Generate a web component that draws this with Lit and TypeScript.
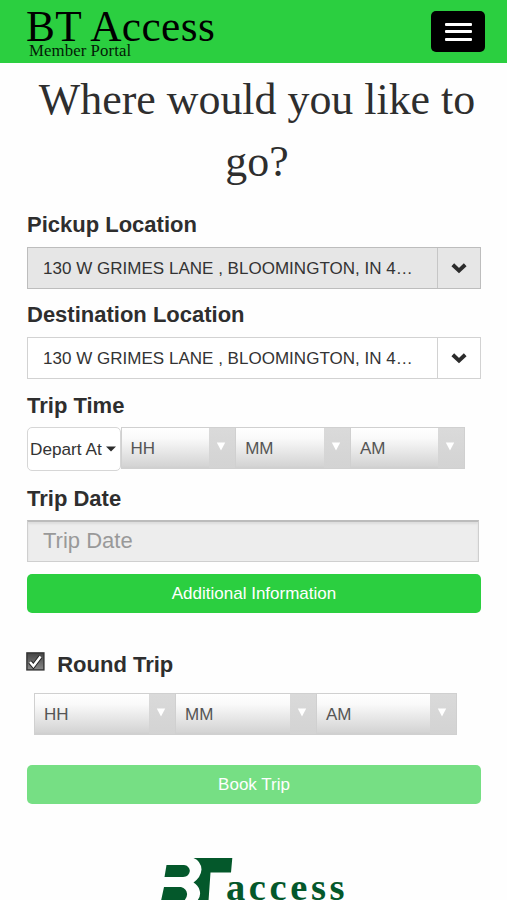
import { LitElement, html, css, svg } from "lit";
import { customElement, property } from "lit/decorators.js";

@customElement("location-picker")
class LocationPicker extends LitElement {
  @property() value = "";
  @property({ type: Boolean, reflect: true }) active = false;

  static styles = css`
    :host { display: flex; box-sizing: border-box; height: 42px; width: 454px; border: 1.5px solid #d2d2d2; background: #fff; }
    :host([active]) { background: #e6e6e6; border-color: #bdbdbd; }
    .value { flex: 1; min-width: 0; padding-left: 15px; font-size: 17px; letter-spacing: 0.02px; line-height: 41px; color: #333; white-space: nowrap; }
    .toggle { box-sizing: border-box; width: 43px; border-left: 1.5px solid #d2d2d2; display: flex; align-items: center; justify-content: center; }
    :host([active]) .toggle { border-color: #c6c6c6; }
  `;

  render() {
    return html`
      <div class="value">${this.value}</div>
      <div class="toggle">
        <svg width="16" height="12" viewBox="0 0 16 12"><path d="M1.8 2.8 L8 8.6 L14.2 2.8" fill="none" stroke="#2c2c2c" stroke-width="4" /></svg>
      </div>`;
  }
}

@customElement("time-select")
class TimeSelect extends LitElement {
  @property() label = "";

  static styles = css`
    :host { display: flex; box-sizing: border-box; height: 42px; border: 1.5px solid #d0d0d0; border-right-width: 0; background: linear-gradient(#fff 0%, #fafafa 25%, #d4d4d4 95%, #cfcfcf 100%); }
    :host(:last-child) { border-right-width: 1.5px; }
    .label { flex: 1; padding-left: 9px; font-size: 17px; line-height: 41px; color: #555; }
    .arrow { width: 26px; background: linear-gradient(#dadada, #d3d3d3); display: flex; padding: 14px 0 0 7px; box-sizing: border-box; }
  `;

  render() {
    return html`
      <div class="label">${this.label}</div>
      <div class="arrow">
        <svg width="10" height="9" viewBox="0 0 10 9"><path d="M0.8 0.5 H9.2 L5 8.5 Z" fill="#fff" /></svg>
      </div>`;
  }
}

@customElement("app-root")
class AppRoot extends LitElement {
  static styles = css`
    :host { display: block; height: 900px; overflow: hidden; background: #fefefe; color: #2e2e2e; font-family: "Liberation Sans", Arial, sans-serif; }
    .bar { box-sizing: border-box; height: 63px; background: #2bcf40; display: flex; justify-content: space-between; padding: 11px 22px 0 26px; }
    .brand { font-family: "Liberation Serif", serif; color: #000; }
    .name { font-size: 43.3px; line-height: 44px; letter-spacing: 0.4px; margin-top: -7px; white-space: nowrap; }
    .sub { font-size: 16.8px; line-height: 18px; letter-spacing: 0.08px; margin: -6px 0 0 3px; color: #031a06; }
    .menu { width: 54px; height: 41px; box-sizing: border-box; border-radius: 5px; background: #000; display: flex; flex-direction: column; align-items: center; justify-content: center; gap: 4.5px; }
    .line { width: 27px; height: 3px; border-radius: 1px; background: #fff; }
    h1 { margin: 5px 0 0 7px; font: 400 43.9px/62px "Liberation Serif", serif; text-align: center; }
    .form { padding: 0 26px 0 27px; }
    h2 { margin: 0; font-size: 22px; line-height: 30px; height: 30px; font-weight: 700; }
    .pickup { margin-top: 18px; }
    .next { margin-top: 11px; }
    .time-title { margin-top: 12px; }
    location-picker { margin-top: 7px; }
    .times { display: flex; margin-top: 6px; }
    .times time-select { width: 114.7px; }
    .depart { box-sizing: border-box; width: 93.5px; height: 44px; border: 1.5px solid #d6d6d6; border-radius: 5px; background: #fff; display: flex; align-items: center; padding-left: 2px; gap: 4px; font-size: 17.2px; color: #333; white-space: nowrap; }
    .date-title { margin-top: 13px; }
    .date { box-sizing: border-box; width: 452px; height: 42px; margin-top: 6px; border: 1.5px solid #cfcfcf; border-top: 2px solid #bcbcbc; background: #ededed; box-shadow: inset 0 2px 2px #dedede; padding-left: 15px; font-size: 22px; line-height: 38px; color: #999; }
    .button { width: 454px; height: 39px; border-radius: 5px; background: #2bcf40; color: #fff; text-align: center; font-size: 17px; line-height: 40px; }
    .info { margin-top: 12px; }
    .round { display: flex; height: 30px; margin-top: 37px; }
    .check { margin-top: 1.5px; margin-left: -0.8px; margin-right: 11px; }
    .return { display: flex; margin: 13px 0 0 7px; width: 423px; }
    .return time-select { width: 141px; }
    .book { margin-top: 30px; opacity: 0.64; }
    .logo { display: block; margin: 53px 0 0 133px; }
    .word { font: 700 38.5px "Liberation Serif", serif; letter-spacing: 3.6px; fill: #04582b; }
  `;

  private selects() {
    return ["HH", "MM", "AM"].map((t) => html`<time-select label=${t}></time-select>`);
  }

  private logo() {
    return svg`
      <g fill="#04582b">
        <path d="M6.5 8 H24 C27 8 29.8 11 29.8 14 C29.5 17 27 20 23 20 H4.5 Z" />
        <path d="M4 30 H21 Q26.5 31.5 27 36.5 Q27.5 40 24 44 H1 Z" />
        <path d="M33.5 1 H72.3 L71 15.5 H50.5 L48.5 44 H37 Q41.5 39 39.5 33 Q38 28 33.5 25.5 Q41 20 41.5 12.5 Q41 4 33.5 1 Z" />
      </g>
      <text class="word" x="66" y="43">access</text>`;
  }

  render() {
    const address = "130 W GRIMES LANE , BLOOMINGTON, IN 4…";
    return html`
      <div class="bar">
        <div class="brand"><div class="name">BT Access</div><div class="sub">Member Portal</div></div>
        <div class="menu"><div class="line"></div><div class="line"></div><div class="line"></div></div>
      </div>
      <h1>Where would you like to<br />go?</h1>
      <div class="form">
        <h2 class="pickup">Pickup Location</h2>
        <location-picker active value=${address}></location-picker>
        <h2 class="next">Destination Location</h2>
        <location-picker value=${address}></location-picker>
        <h2 class="time-title">Trip Time</h2>
        <div class="times">
          <div class="depart">Depart At
            <svg width="10" height="6" viewBox="0 0 10 6"><path d="M0 0.5 H10 L5 5.5 Z" fill="#2c2c2c" /></svg>
          </div>
          ${this.selects()}
        </div>
        <h2 class="date-title">Trip Date</h2>
        <div class="date">Trip Date</div>
        <div class="button info">Additional Information</div>
        <div class="round">
          <svg class="check" width="20" height="20" viewBox="0 0 20 20">
            <defs><linearGradient id="shade" x1="0" y1="0" x2="0" y2="1"><stop offset="0" stop-color="#444" /><stop offset="1" stop-color="#888" /></linearGradient></defs>
            <rect x="0.9" y="0.9" width="17" height="17" fill="url(#shade)" stroke="#333" stroke-width="1.4" />
            <path d="M4 10 L7.4 14 L14.6 4.5" fill="none" stroke="#222" stroke-width="4.4" />
            <path d="M4 10 L7.4 14 L14.6 4.5" fill="none" stroke="#fff" stroke-width="2.5" />
          </svg>
          <h2>Round Trip</h2>
        </div>
        <div class="return">${this.selects()}</div>
        <div class="button book">Book Trip</div>
        <svg class="logo" width="190" height="43" viewBox="0 0 190 43">${this.logo()}</svg>
      </div>`;
  }
}
